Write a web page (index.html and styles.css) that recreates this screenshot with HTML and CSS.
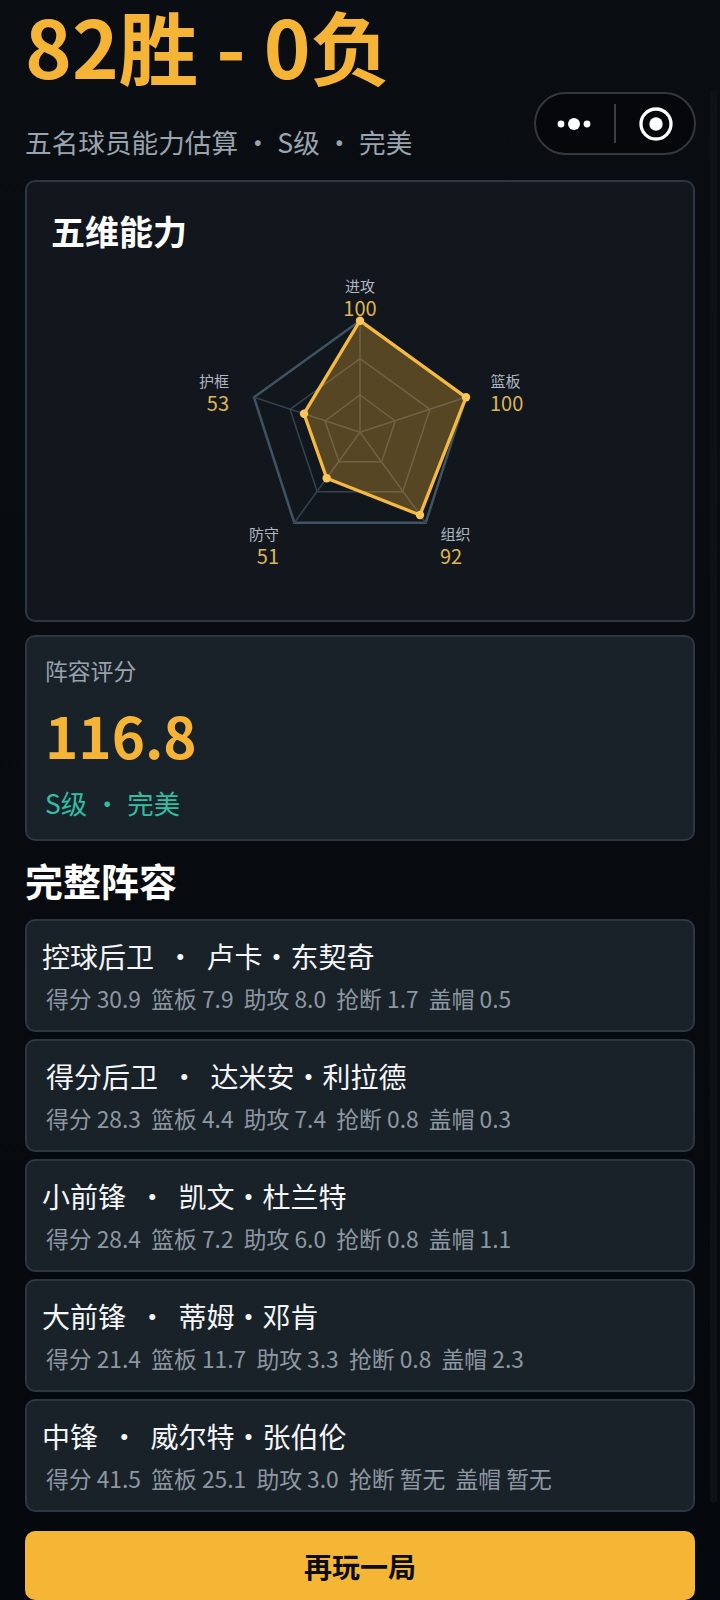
FILE: index.html
```html
<!DOCTYPE html>
<html lang="zh-CN">
<head>
    <meta charset="UTF-8">
    <meta name="viewport" content="width=device-width, initial-scale=1.0">
    <title>结果</title>
    <link rel="stylesheet" href="styles.css">
</head>
<body>
    <div class="page">
        <h1 class="record">82胜 - 0负</h1>
        <div class="subtitle">五名球员能力估算 ・ S级 ・ 完美</div>

        <div class="card radar-card">
            <h2 class="radar-title">五维能力</h2>
            <div class="radar-wrap">
                <svg class="radar" width="360" height="320" viewBox="0 0 360 320">
                    <polygon class="ring-outer" points="180,60.7 286,137.3 245.7,262.7 114.3,262.7 74,137.3"/>
                    <g class="grid">
                        <polygon points="180,98.7 250,149.3 222.7,231.7 137.3,231.7 110,149.3"/>
                        <polygon points="180,135 215.3,161 201.7,201.7 159,201.7 145,161"/>
                        <line x1="180" y1="172.3" x2="180" y2="60.7"/>
                        <line x1="180" y1="172.3" x2="286" y2="137.3"/>
                        <line x1="180" y1="172.3" x2="245.7" y2="262.7"/>
                        <line x1="180" y1="172.3" x2="114.3" y2="262.7"/>
                        <line x1="180" y1="172.3" x2="74" y2="137.3"/>
                    </g>
                    <polygon class="radar-area" points="180,60.7 286,137.3 240,255 146.7,218.3 124,153.7"/>
                    <g class="radar-dots">
                        <circle cx="180" cy="60.7" r="4.2"/>
                        <circle cx="286" cy="137.3" r="4.2"/>
                        <circle cx="240" cy="255" r="4.2"/>
                        <circle cx="146.7" cy="218.3" r="4.2"/>
                        <circle cx="124" cy="153.7" r="4.2"/>
                    </g>
                    <g class="axis-name">
                        <text x="180" y="32" text-anchor="middle">进攻</text>
                        <text x="310.5" y="127">篮板</text>
                        <text x="260.5" y="280">组织</text>
                        <text x="99" y="280" text-anchor="end">防守</text>
                        <text x="49" y="127" text-anchor="end">护框</text>
                    </g>
                    <g class="axis-value">
                        <text x="180" y="56" text-anchor="middle">100</text>
                        <text x="310" y="151">100</text>
                        <text x="260" y="304">92</text>
                        <text x="99" y="304" text-anchor="end">51</text>
                        <text x="49" y="151" text-anchor="end">53</text>
                    </g>
                </svg>
            </div>
        </div>

        <div class="card score-card">
            <div class="score-label">阵容评分</div>
            <div class="score-value">116.8</div>
            <div class="score-grade">S级 ・ 完美</div>
        </div>

        <h2 class="section-title">完整阵容</h2>

        <div class="player-list">
            <div class="card player">
                <div class="player-name">控球后卫 ・ 卢卡・东契奇</div>
                <div class="player-stats">得分 30.9&nbsp; 篮板 7.9&nbsp; 助攻 8.0&nbsp; 抢断 1.7&nbsp; 盖帽 0.5</div>
            </div>
            <div class="card player">
                <div class="player-name player-name-inset">得分后卫 ・ 达米安・利拉德</div>
                <div class="player-stats">得分 28.3&nbsp; 篮板 4.4&nbsp; 助攻 7.4&nbsp; 抢断 0.8&nbsp; 盖帽 0.3</div>
            </div>
            <div class="card player">
                <div class="player-name">小前锋 ・ 凯文・杜兰特</div>
                <div class="player-stats">得分 28.4&nbsp; 篮板 7.2&nbsp; 助攻 6.0&nbsp; 抢断 0.8&nbsp; 盖帽 1.1</div>
            </div>
            <div class="card player">
                <div class="player-name">大前锋 ・ 蒂姆・邓肯</div>
                <div class="player-stats">得分 21.4&nbsp; 篮板 11.7&nbsp; 助攻 3.3&nbsp; 抢断 0.8&nbsp; 盖帽 2.3</div>
            </div>
            <div class="card player">
                <div class="player-name">中锋 ・ 威尔特・张伯伦</div>
                <div class="player-stats">得分 41.5&nbsp; 篮板 25.1&nbsp; 助攻 3.0&nbsp; 抢断 暂无&nbsp; 盖帽 暂无</div>
            </div>
        </div>

        <button class="again-btn">再玩一局</button>
    </div>

    <!-- mini program capsule sits over the page -->
    <div class="capsule">
        <svg width="36" height="14" viewBox="0 0 36 14" fill="#fff">
            <circle cx="5" cy="7" r="3.4"/>
            <circle cx="18" cy="7" r="6"/>
            <circle cx="31" cy="7" r="3.4"/>
        </svg>
        <span class="capsule-line"></span>
        <svg width="36" height="36" viewBox="0 0 36 36" fill="none">
            <circle cx="18" cy="18" r="15" stroke="#fff" stroke-width="3.3"/>
            <circle cx="18" cy="18" r="6.7" fill="#fff"/>
        </svg>
    </div>
    <div class="scrollbar"></div>
</body>
</html>
```

FILE: styles.css
```css
* {
    margin: 0;
    padding: 0;
    box-sizing: border-box;
}

html, body {
    height: 1600px;
    overflow: hidden;
}

body {
    font-family: "Noto Sans CJK SC", "Noto Sans", sans-serif;
    background: linear-gradient(180deg, #0a0e13 0%, #05080c 100%);
    color: #fff;
    position: relative;
}

.page {
    padding: 0 25px;
}

.record {
    font-size: 79.5px;
    line-height: 90px;
    font-weight: 700;
    color: #f5b435;
    margin-bottom: 34px;
    white-space: nowrap;
}

.subtitle {
    font-size: 26.65px;
    line-height: 36px;
    word-spacing: 0.3px;
    color: #9aa4ae;
    margin-bottom: 20px;
}

.card {
    border: 2px solid #2c3742;
    border-radius: 10px;
    background: #1a2229;
}

.radar-card {
    height: 442px;
    background: #12171e;
    padding: 25px 24px 0;
}

.radar-title {
    font-size: 34px;
    line-height: 48px;
    font-weight: 700;
}

.radar-wrap {
    display: flex;
    justify-content: center;
    margin-top: 5px;
}

.ring-outer {
    fill: none;
    stroke: #3f5360;
    stroke-width: 2.5;
}

.grid {
    fill: none;
    stroke: #36424c;
    stroke-width: 1.5;
}

.radar-area {
    fill: rgba(245, 180, 53, 0.3);
    stroke: #f5b940;
    stroke-width: 3.3;
    stroke-linejoin: round;
}

.radar-dots {
    fill: #fcc65a;
}

.axis-name {
    font-size: 15px;
    fill: #b0b8c0;
}

.axis-value {
    font-size: 20px;
    fill: #dfb454;
}

.score-card {
    margin-top: 13px;
    height: 206px;
    padding: 18px;
}

.score-label {
    font-size: 22.8px;
    line-height: 32px;
    color: #98a2ac;
}

.score-value {
    font-size: 56.5px;
    line-height: 72px;
    font-weight: 700;
    color: #f5b435;
    margin-top: 11px;
}

.score-grade {
    font-size: 26.4px;
    line-height: 36px;
    word-spacing: 1px;
    color: #2ebfa5;
    margin-top: 15px;
}

.section-title {
    font-size: 38px;
    line-height: 50px;
    font-weight: 700;
    margin-top: 14px;
    margin-bottom: 14px;
}

.player-list {
    display: flex;
    flex-direction: column;
    gap: 7px;
}

.player {
    height: 113px;
    padding: 15px;
}

.player-name {
    font-size: 28px;
    line-height: 40px;
    word-spacing: 6px;
    color: #f4f6f8;
}

/* this row starts a little further in on the reference */
.player-name-inset {
    padding-left: 4px;
}

.player-stats {
    font-size: 22.8px;
    line-height: 34px;
    color: #8d97a1;
    margin-top: 6px;
    padding-left: 4px;
}

.again-btn {
    display: block;
    width: 100%;
    height: 69px;
    margin-top: 19px;
    border: none;
    border-radius: 10px;
    background: #f5b635;
    color: #0b0c0e;
    font-family: inherit;
    font-size: 28px;
    font-weight: 700;
}

.capsule {
    position: absolute;
    left: 534px;
    top: 92px;
    width: 162px;
    height: 63px;
    border: 2px solid #33383e;
    border-radius: 32px;
    background: #05070a;
    display: flex;
    align-items: center;
    justify-content: space-between;
    padding: 0 20px;
}

.capsule-line {
    width: 1.5px;
    height: 39px;
    background: #3a3f45;
}

.scrollbar {
    position: absolute;
    left: 710px;
    top: 90px;
    width: 7px;
    height: 1413px;
    border-radius: 4px;
    background: #0e1217;
}
```
